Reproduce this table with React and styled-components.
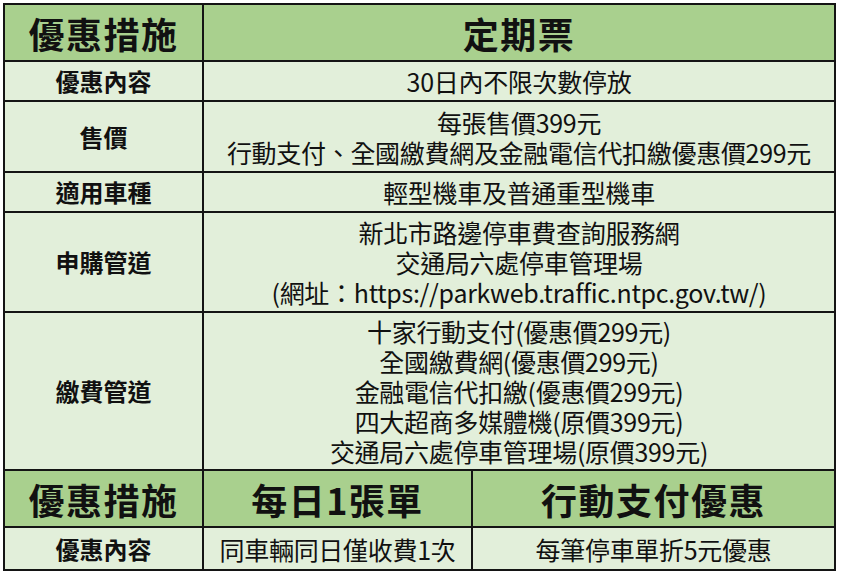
import React from 'react';
import styled, { createGlobalStyle } from 'styled-components';

const GlobalStyle = createGlobalStyle`
  html, body {
    margin: 0;
    padding: 0;
    background: #ffffff;
  }
  body {
    font-family: "Noto Sans CJK TC", "Noto Sans", sans-serif;
    color: #111111;
  }
`;

const Page = styled.div`
  padding: 3px 0 0 3px;
`;

const Table = styled.div`
  display: grid;
  grid-template-columns: 199px 269px 363px;
  grid-template-rows: 57px 40px 71px 40px 100px 158px 57px 43px;
  width: 833px;
  border-top: 2px solid #141414;
  border-left: 2px solid #141414;
  box-sizing: border-box;
`;

const Cell = styled.div`
  grid-column: ${(p) => p.$span || 'auto'};
  display: flex;
  flex-direction: column;
  align-items: center;
  justify-content: center;
  text-align: center;
  border-right: 2px solid #141414;
  border-bottom: 2px solid #141414;
  background: ${(p) => (p.$head ? '#a9d08e' : '#e2efda')};
  box-sizing: border-box;
  white-space: nowrap;
`;

const HeadText = styled.span`
  display: block;
  font-size: 36px;
  font-weight: 700;
  line-height: 40px;
  letter-spacing: 1.5px;
`;

const Label = styled.span`
  display: block;
  font-size: 24px;
  font-weight: 700;
  line-height: 28px;
`;

const Line = styled.span`
  display: block;
  font-size: 25px;
  font-weight: 400;
  line-height: 30px;
  letter-spacing: -0.3px;
`;

const rows = [
  { label: '優惠內容', lines: ['30日內不限次數停放'] },
  { label: '售價', lines: ['每張售價399元', '行動支付、全國繳費網及金融電信代扣繳優惠價299元'] },
  { label: '適用車種', lines: ['輕型機車及普通重型機車'] },
  {
    label: '申購管道',
    lines: ['新北市路邊停車費查詢服務網', '交通局六處停車管理場', '(網址：https://parkweb.traffic.ntpc.gov.tw/)'],
  },
  {
    label: '繳費管道',
    lines: [
      '十家行動支付(優惠價299元)',
      '全國繳費網(優惠價299元)',
      '金融電信代扣繳(優惠價299元)',
      '四大超商多媒體機(原價399元)',
      '交通局六處停車管理場(原價399元)',
    ],
  },
];

export default function App() {
  return (
    <Page>
      <GlobalStyle />
      <Table>
        <Cell $head>
          <HeadText>優惠措施</HeadText>
        </Cell>
        <Cell $head $span="span 2">
          <HeadText>定期票</HeadText>
        </Cell>
        {rows.map((r) => (
          <React.Fragment key={r.label}>
            <Cell>
              <Label>{r.label}</Label>
            </Cell>
            <Cell $span="span 2">
              {r.lines.map((l) => (
                <Line key={l}>{l}</Line>
              ))}
            </Cell>
          </React.Fragment>
        ))}
        <Cell $head>
          <HeadText>優惠措施</HeadText>
        </Cell>
        <Cell $head>
          <HeadText>每日1張單</HeadText>
        </Cell>
        <Cell $head>
          <HeadText>行動支付優惠</HeadText>
        </Cell>
        <Cell>
          <Label>優惠內容</Label>
        </Cell>
        <Cell>
          <Line>同車輛同日僅收費1次</Line>
        </Cell>
        <Cell>
          <Line>每筆停車單折5元優惠</Line>
        </Cell>
      </Table>
    </Page>
  );
}
